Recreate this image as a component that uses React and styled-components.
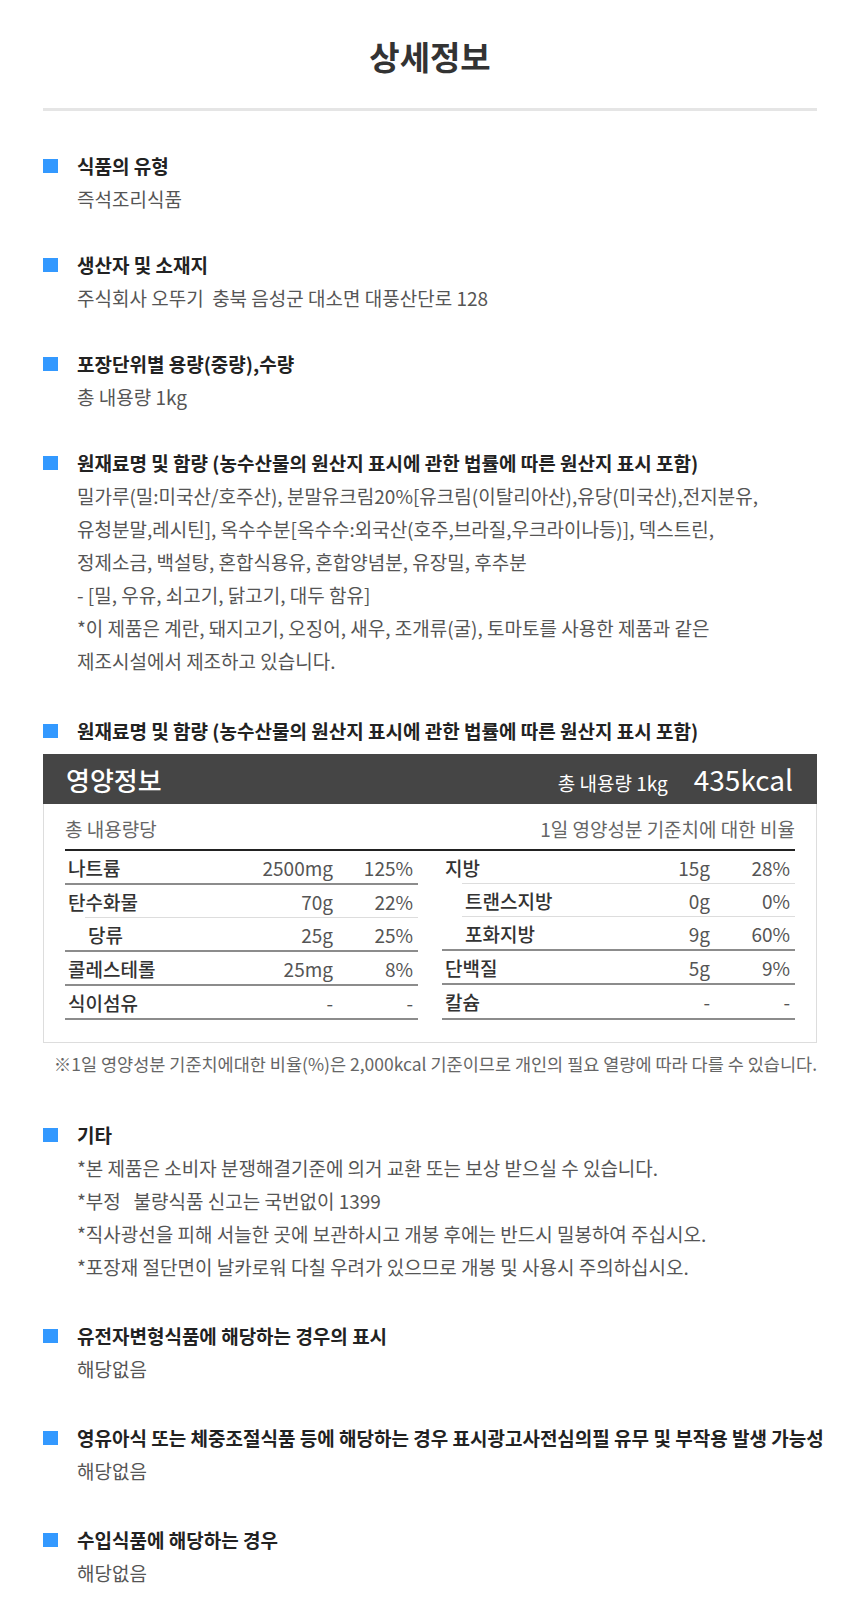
import React from 'react';
import styled, { createGlobalStyle } from 'styled-components';

const GlobalStyle = createGlobalStyle`
  body {
    margin: 0;
    background: #fff;
    font-family: 'Noto Sans CJK KR', 'Noto Sans', sans-serif;
  }
`;

const sections = [
  { title: '식품의 유형', lines: ['즉석조리식품'] },
  { title: '생산자 및 소재지', lines: ['주식회사 오뚜기  충북 음성군 대소면 대풍산단로 128'] },
  { title: '포장단위별 용량(중량),수량', lines: ['총 내용량 1kg'] },
  {
    title: '원재료명 및 함량 (농수산물의 원산지 표시에 관한 법률에 따른 원산지 표시 포함)',
    lines: [
      '밀가루(밀:미국산/호주산), 분말유크림20%[유크림(이탈리아산),유당(미국산),전지분유,',
      '유청분말,레시틴], 옥수수분[옥수수:외국산(호주,브라질,우크라이나등)], 덱스트린,',
      '정제소금, 백설탕, 혼합식용유, 혼합양념분, 유장밀, 후추분',
      '- [밀, 우유, 쇠고기, 닭고기, 대두 함유]',
      '*이 제품은 계란, 돼지고기, 오징어, 새우, 조개류(굴), 토마토를 사용한 제품과 같은',
      '제조시설에서 제조하고 있습니다.',
    ],
  },
];

const lateSections = [
  {
    title: '기타',
    lines: [
      '*본 제품은 소비자 분쟁해결기준에 의거 교환 또는 보상 받으실 수 있습니다.',
      '*부정   불량식품 신고는 국번없이 1399',
      '*직사광선을 피해 서늘한 곳에 보관하시고 개봉 후에는 반드시 밀봉하여 주십시오.',
      '*포장재 절단면이 날카로워 다칠 우려가 있으므로 개봉 및 사용시 주의하십시오.',
    ],
  },
  { title: '유전자변형식품에 해당하는 경우의 표시', lines: ['해당없음'] },
  {
    title: '영유아식 또는 체중조절식품 등에 해당하는 경우 표시광고사전심의필 유무 및 부작용 발생 가능성',
    lines: ['해당없음'],
  },
  { title: '수입식품에 해당하는 경우', lines: ['해당없음'] },
];

const leftNutrients = [
  { name: '나트륨', amount: '2500mg', pct: '125%' },
  { name: '탄수화물', amount: '70g', pct: '22%' },
  { name: '당류', amount: '25g', pct: '25%', sub: true },
  { name: '콜레스테롤', amount: '25mg', pct: '8%' },
  { name: '식이섬유', amount: '-', pct: '-' },
];

const rightNutrients = [
  { name: '지방', amount: '15g', pct: '28%' },
  { name: '트랜스지방', amount: '0g', pct: '0%', sub: true },
  { name: '포화지방', amount: '9g', pct: '60%', sub: true },
  { name: '단백질', amount: '5g', pct: '9%' },
  { name: '칼슘', amount: '-', pct: '-' },
];

const InfoSection = ({ title, lines, children, spaced }) => (
  <Section $spaced={spaced}>
    <SectionTitle>
      <Marker />
      <span>{title}</span>
    </SectionTitle>
    {lines && (
      <SectionBody>
        {lines.map((l, i) => (
          <Line key={i}>{l}</Line>
        ))}
      </SectionBody>
    )}
    {children}
  </Section>
);

const NutrientColumn = ({ items }) => (
  <Column>
    {items.map((n) => (
      <Row key={n.name} $sub={n.sub}>
        <Name>{n.name}</Name>
        <Amount>{n.amount}</Amount>
        <Pct>{n.pct}</Pct>
      </Row>
    ))}
  </Column>
);

const App = () => {
  return (
    <>
      <GlobalStyle />
      <Page>
        <PageTitle>상세정보</PageTitle>
        <Divider />
        <Sections>
          {sections.map((s) => (
            <InfoSection key={s.title} title={s.title} lines={s.lines} />
          ))}

          <InfoSection spaced title="원재료명 및 함량 (농수산물의 원산지 표시에 관한 법률에 따른 원산지 표시 포함)">
            <NutriBox>
              <NutriHead>
                <HeadTitle>영양정보</HeadTitle>
                <HeadRight>
                  <Serving>총 내용량 1kg</Serving>
                  <Kcal>435kcal</Kcal>
                </HeadRight>
              </NutriHead>
              <NutriBody>
                <SubHead>
                  <span>총 내용량당</span>
                  <span>1일 영양성분 기준치에 대한 비율</span>
                </SubHead>
                <Columns>
                  <NutrientColumn items={leftNutrients} />
                  <NutrientColumn items={rightNutrients} />
                </Columns>
              </NutriBody>
            </NutriBox>
            <Footnote>
              ※1일 영양성분 기준치에대한 비율(%)은 2,000kcal 기준이므로 개인의 필요 열량에 따라 다를 수 있습니다.
            </Footnote>
          </InfoSection>

          <LateGroup>
            {lateSections.map((s) => (
              <InfoSection key={s.title} title={s.title} lines={s.lines} />
            ))}
          </LateGroup>
        </Sections>
      </Page>
    </>
  );
};

export default App;

// Styled Components
const Page = styled.div`
  width: 860px;
  box-sizing: border-box;
  padding: 33px 43px 30px;
`;

const PageTitle = styled.h1`
  margin: 0;
  text-align: center;
  font-size: 33px;
  line-height: 46px;
  font-weight: 700;
  color: #333;
`;

const Divider = styled.hr`
  border: 0;
  height: 3px;
  background: #e5e5e5;
  margin: 29px 0 0;
`;

const Sections = styled.div`
  padding-top: 38px;
  display: flex;
  flex-direction: column;
  gap: 33px;
`;

const LateGroup = styled.div`
  display: flex;
  flex-direction: column;
  gap: 36px;
`;

const Section = styled.section`
  display: flex;
  flex-direction: column;
  margin-top: ${(p) => (p.$spaced ? '4px' : '0')};
`;

const SectionTitle = styled.h3`
  margin: 0;
  display: flex;
  align-items: center;
  gap: 19px;
  font-size: 19px;
  line-height: 33px;
  font-weight: 700;
  color: #222;
  white-space: nowrap;
`;

const Marker = styled.i`
  flex: none;
  width: 15px;
  height: 14px;
  background: #3399ff;
`;

const SectionBody = styled.div`
  padding-left: 34px;
  font-size: 19px;
  line-height: 33px;
  color: #555;
`;

const Line = styled.div`
  white-space: pre;
`;

const NutriBox = styled.div`
  margin-top: 7px;
`;

const NutriHead = styled.div`
  height: 50px;
  display: flex;
  align-items: center;
  justify-content: space-between;
  padding: 0 24px 0 23px;
  background: #454545;
  color: #fff;
`;

const HeadTitle = styled.div`
  font-size: 26px;
  font-weight: 500;
`;

const HeadRight = styled.div`
  display: flex;
  align-items: baseline;
  gap: 26px;
`;

const Serving = styled.span`
  font-size: 19px;
`;

const Kcal = styled.span`
  font-size: 28px;
`;

const NutriBody = styled.div`
  border: 1px solid #ddd;
  border-top: 0;
  padding: 0 21px 22px;
`;

const SubHead = styled.div`
  display: flex;
  justify-content: space-between;
  padding: 12px 0 8px;
  line-height: 25px;
  font-size: 19px;
  color: #666;
`;

const Columns = styled.div`
  display: grid;
  grid-template-columns: 1fr 1fr;
  column-gap: 24px;
  border-top: 2px solid #222;
`;

const Column = styled.div`
  border-bottom: 2px solid #8c8c8c;
`;

const Row = styled.div`
  display: flex;
  align-items: center;
  height: 32px;
  font-size: 19px;
  border-top: ${(p) => (p.$sub ? '1px solid #ddd' : '2px solid #8c8c8c')};
  margin-left: ${(p) => (p.$sub ? '20px' : '0')};
  &:first-child {
    border-top: 0;
  }
`;

const Name = styled.span`
  flex: 1;
  padding-left: 3px;
  color: #333;
  font-weight: 500;
`;

const Amount = styled.span`
  width: 100px;
  text-align: right;
  color: #555;
`;

const Pct = styled.span`
  width: 80px;
  padding-right: 5px;
  text-align: right;
  color: #555;
`;

const Footnote = styled.div`
  margin: 6px 0 6px;
  text-align: right;
  font-size: 17.5px;
  line-height: 30px;
  color: #666;
  white-space: nowrap;
`;
